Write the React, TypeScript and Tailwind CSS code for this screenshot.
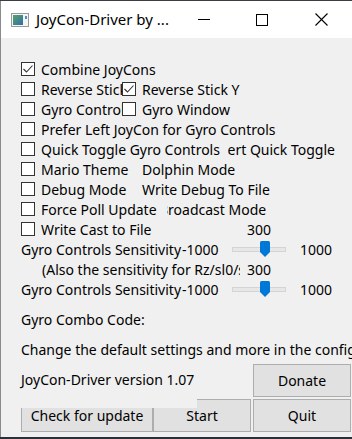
import React from 'react';

const font = { fontFamily: '"Noto Sans", "Open Sans", sans-serif' };

function Box({ checked = false }: { checked?: boolean }) {
  return (
    <span className="flex h-[14px] w-[14px] shrink-0 items-center justify-center border border-[#333333] bg-white">
      {checked && (
        <svg width="12" height="12" viewBox="0 0 12 12">
          <polyline points="1.5,6 4.5,9 10.5,2.5" fill="none" stroke="#333333" strokeWidth="1.1" />
        </svg>
      )}
    </span>
  );
}

function Check({ label, checked = false }: { label: string; checked?: boolean }) {
  return (
    <span className="flex items-center gap-[6px] whitespace-nowrap">
      <Box checked={checked} />
      <span>{label}</span>
    </span>
  );
}

function Slider() {
  return (
    <div className="relative flex h-[20px] w-[62px] shrink-0 items-center">
      <div className="ml-[7px] h-[5px] w-[54px] border border-[#d4d4d4] bg-[#e7e7e7]" />
      <svg className="absolute left-[35px] top-[2px]" width="10" height="16" viewBox="0 0 10 16">
        <path d="M0 1.5 Q0 0 1.5 0 H8.5 Q10 0 10 1.5 V11 L5 16 L0 11 Z" fill="#0078d7" />
      </svg>
    </div>
  );
}

function SensitivityRow() {
  return (
    <div className="flex h-[20px] items-center">
      <div className="w-[161px] shrink-0 overflow-hidden whitespace-nowrap">Gyro Controls Sensitivity</div>
      <div className="w-[43px] shrink-0 whitespace-nowrap">-1000</div>
      <Slider />
      <div className="ml-[13px] whitespace-nowrap">1000</div>
    </div>
  );
}

function Button({ label, className }: { label: string; className: string }) {
  return (
    <div
      className={`flex shrink-0 items-center justify-center border border-[#adadad] bg-[#e1e1e1] ${className}`}
    >
      {label}
    </div>
  );
}

export default function App() {
  return (
    <div className="h-[439px] w-[352px] overflow-hidden bg-[#2b2f38] text-[14px] text-black" style={font}>
      <div className="h-px bg-[#3b3d42]" />
      <div className="h-[436px] border-l border-[#8a8a8a] bg-[#f0f0f0]">
        {/* title bar */}
        <div className="flex h-[37px] items-center bg-white">
          <svg className="ml-[10px]" width="18" height="14" viewBox="0 0 18 14">
            <rect x="0.5" y="0.5" width="17" height="13" fill="#f4f4f4" stroke="#9a9a9a" />
            <defs>
              <linearGradient id="ic" x1="0" y1="0" x2="1" y2="1">
                <stop offset="0" stopColor="#5aa06a" />
                <stop offset="1" stopColor="#2f6fa8" />
              </linearGradient>
            </defs>
            <rect x="2" y="2" width="10" height="10" fill="url(#ic)" />
            <rect x="14" y="3" width="2" height="3" fill="#4d8fc7" />
          </svg>
          <span className="ml-[7px] w-[151px] whitespace-nowrap text-[15px]">JoyCon-Driver by ...</span>
          <div className="ml-[11px] h-px w-[12px] bg-black" />
          <div className="ml-[46px] h-[12px] w-[12px] border border-black" />
          <svg className="ml-[47px]" width="13" height="13" viewBox="0 0 13 13">
            <path d="M0.5 0.5 L12.5 12.5 M12.5 0.5 L0.5 12.5" stroke="black" strokeWidth="1.1" />
          </svg>
        </div>

        <div className="flex flex-col pl-[20px] pt-[21px]">
          <div className="flex h-[20px] items-center">
            <Check label="Combine JoyCons" checked />
          </div>
          <div className="flex h-[20px] items-center">
            <div className="w-[101px] shrink-0 overflow-hidden">
              <Check label="Reverse Stick X" />
            </div>
            <Check label="Reverse Stick Y" checked />
          </div>
          <div className="flex h-[20px] items-center">
            <div className="w-[101px] shrink-0 overflow-hidden">
              <Check label="Gyro Controls" />
            </div>
            <Check label="Gyro Window" />
          </div>
          <div className="flex h-[20px] items-center">
            <Check label="Prefer Left JoyCon for Gyro Controls" />
          </div>
          <div className="flex h-[20px] items-center">
            <div className="relative z-10 w-[207px] shrink-0 overflow-hidden bg-[#f0f0f0]">
              <Check label="Quick Toggle Gyro Controls" />
            </div>
            <div className="-ml-[41px]">
              <Check label="Invert Quick Toggle" />
            </div>
          </div>
          <div className="flex h-[20px] items-center">
            <div className="relative z-10 w-[119px] shrink-0 overflow-hidden bg-[#f0f0f0]">
              <Check label="Mario Theme" />
            </div>
            <div className="-ml-[18px]">
              <Check label="Dolphin Mode" />
            </div>
          </div>
          <div className="flex h-[20px] items-center">
            <div className="relative z-10 w-[119px] shrink-0 overflow-hidden bg-[#f0f0f0]">
              <Check label="Debug Mode" />
            </div>
            <div className="-ml-[18px]">
              <Check label="Write Debug To File" />
            </div>
          </div>
          <div className="flex h-[20px] items-center">
            <div className="relative z-10 w-[146px] shrink-0 overflow-hidden bg-[#f0f0f0]">
              <Check label="Force Poll Update" />
            </div>
            <div className="-ml-[28px]">
              <Check label="Broadcast Mode" />
            </div>
          </div>
          <div className="flex h-[20px] items-center">
            <div className="w-[200px] shrink-0">
              <Check label="Write Cast to File" />
            </div>
            <div className="w-[50px] text-right">300</div>
          </div>

          <SensitivityRow />
          <div className="flex h-[20px] items-center">
            <div className="ml-[21px] w-[198px] shrink-0 overflow-hidden whitespace-nowrap">
              (Also the sensitivity for Rz/sl0/sl1)
            </div>
            <div className="w-[31px] text-right">300</div>
          </div>
          <SensitivityRow />

          <div className="mt-[10px] flex h-[20px] items-center">Gyro Combo Code:</div>
          <div className="mt-[10px] flex h-[20px] items-center whitespace-nowrap">
            Change the default settings and more in the config file
          </div>

          <div className="mt-[5px] flex h-[35px] items-start">
            <div className="relative z-10 h-[44px] w-[176px] shrink-0 whitespace-nowrap bg-[#f0f0f0] pt-[5px]">
              JoyCon-Driver version 1.07
            </div>
            <Button label="Donate" className="ml-[56px] h-[33px] w-[98px]" />
          </div>
          <div className="flex h-[33px]">
            <Button label="Check for update" className="h-[33px] w-[132px]" />
            <Button label="Start" className="h-[33px] w-[98px]" />
            <Button label="Quit" className="ml-[2px] h-[33px] w-[98px]" />
          </div>
        </div>
      </div>
    </div>
  );
}
